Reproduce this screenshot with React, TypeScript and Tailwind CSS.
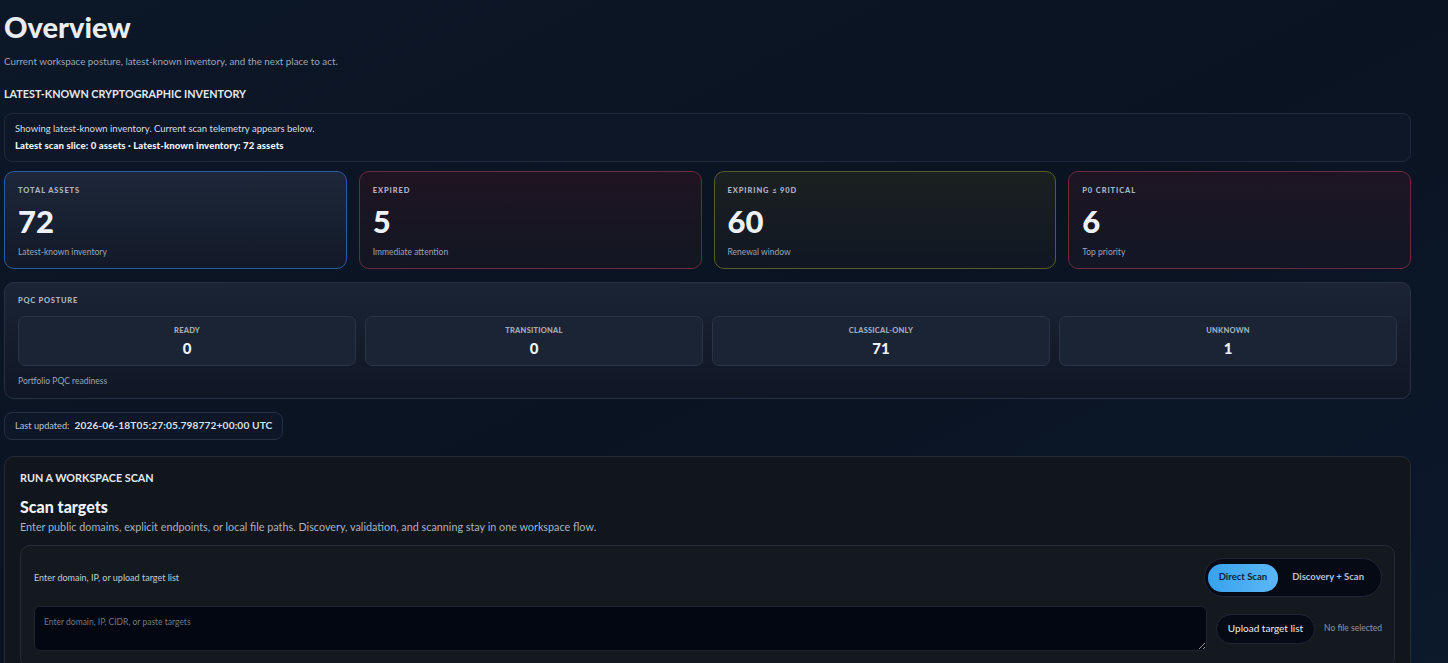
const stats = [
  {
    label: "TOTAL ASSETS",
    value: "72",
    note: "Latest-known inventory",
    tone: "border-[#2b5aa6] bg-gradient-to-b from-[#1e2739] to-[#121a29]",
  },
  {
    label: "EXPIRED",
    value: "5",
    note: "Immediate attention",
    tone: "border-[#6e2a38] bg-gradient-to-b from-[#1f1422] to-[#121623]",
  },
  {
    label: "EXPIRING ≤ 90D",
    value: "60",
    note: "Renewal window",
    tone: "border-[#5c5a26] bg-gradient-to-b from-[#1b2020] to-[#111723]",
  },
  {
    label: "P0 CRITICAL",
    value: "6",
    note: "Top priority",
    tone: "border-[#6e2a38] bg-gradient-to-b from-[#1e1524] to-[#121625]",
  },
];

const posture = [
  { label: "READY", value: "0" },
  { label: "TRANSITIONAL", value: "0" },
  { label: "CLASSICAL-ONLY", value: "71" },
  { label: "UNKNOWN", value: "1" },
];

export default function App() {
  return (
    <div className="min-h-screen bg-gradient-to-br from-[#0c1727] via-[#0a1322] to-[#0c1a2c] font-['Lato',sans-serif] text-[#e6ebf2]">
      <main className="w-[1411px] pl-1 pt-[10px] pb-10">
        <h1 className="text-[29px] font-black leading-[34px] text-[#e8edf4]">Overview</h1>
        <p className="mt-[10px] text-[9.8px] leading-[14px] text-[#9aa6b6]">
          Current workspace posture, latest-known inventory, and the next place to act.
        </p>
        <h2 className="mt-[19px] text-[10.8px] font-bold leading-[14px] text-[#e2e8f0]">
          LATEST-KNOWN CRYPTOGRAPHIC INVENTORY
        </h2>

        <div className="mt-[12px] flex h-[49px] flex-col justify-center gap-[5px] rounded-[8px] border border-[#1e2a3b] bg-[#0d1727] px-[10px]">
          <p className="text-[9.5px] leading-[12px] text-[#d5dce6]">
            Showing latest-known inventory. Current scan telemetry appears below.
          </p>
          <p className="text-[9.6px] font-black leading-[12px] tracking-[0.01em] text-[#eef2f7]">
            Latest scan slice: 0 assets · Latest-known inventory: 72 assets
          </p>
        </div>

        <div className="mt-[9px] grid grid-cols-4 gap-[12px]">
          {stats.map((s) => (
            <div key={s.label} className={`h-[98px] rounded-[10px] border px-[13px] pt-[14px] ${s.tone}`}>
              <div className="text-[7.5px] font-black leading-[10px] tracking-[0.12em] text-[#aab4c3]">{s.label}</div>
              <div className="mt-[9px] text-[31px] font-black leading-[32px] text-[#eef2f8]">{s.value}</div>
              <div className="mt-[9px] text-[8.5px] leading-[12px] text-[#9aa5b5]">{s.note}</div>
            </div>
          ))}
        </div>

        <div className="mt-[13px] h-[117px] rounded-[10px] border border-[#263143] bg-gradient-to-b from-[#1b2435] to-[#0f1625] px-[13px] pt-[13px]">
          <div className="text-[7.5px] font-black leading-[10px] tracking-[0.1em] text-[#aab4c3]">PQC POSTURE</div>
          <div className="mt-[10px] grid grid-cols-4 gap-[9px]">
            {posture.map((p) => (
              <div
                key={p.label}
                className="flex h-[50px] flex-col items-center justify-center gap-[4px] rounded-[7px] border border-[#2a3446] bg-[#1b2434]"
              >
                <div className="text-[7.5px] font-black leading-[10px] tracking-[0.03em] text-[#a3adbb]">{p.label}</div>
                <div className="text-[15px] font-black leading-[16px] text-[#eef2f8]">{p.value}</div>
              </div>
            ))}
          </div>
          <div className="mt-[9px] text-[8.5px] leading-[12px] text-[#9aa5b5]">Portfolio PQC readiness</div>
        </div>

        <div className="mt-[13px] inline-flex h-[28px] items-center gap-[5px] rounded-[8px] border border-[#243044] bg-[#0d1727] px-[10px]">
          <span className="text-[9.2px] text-[#b9c2ce]">Last updated:</span>
          <span className="text-[10.2px] font-bold tracking-[0.01em] text-[#d9e0ea]">2026-06-18T05:27:05.798772+00:00 UTC</span>
        </div>

        <section className="mt-[16px] rounded-[10px] border border-[#262c36] bg-[#11151c] px-[15px] pt-[14px] pb-4">
          <div className="text-[10.8px] font-bold leading-[14px] text-[#e2e8f0]">RUN A WORKSPACE SCAN</div>
          <h3 className="mt-[13px] text-[16px] font-black leading-[18px] text-[#eef2f8]">Scan targets</h3>
          <p className="mt-[4px] text-[10.8px] leading-[14px] text-[#a8b2c0]">
            Enter public domains, explicit endpoints, or local file paths. Discovery, validation, and scanning stay in one workspace flow.
          </p>
          <div className="mt-[11px] rounded-[10px] border border-[#252c37] bg-[#141920] pl-[13px] pr-[12px] pt-[12px] pb-4">
            <div className="flex items-center justify-between">
              <span className="text-[9px] text-[#c2cad5]">Enter domain, IP, or upload target list</span>
              <div className="flex h-[39px] items-center rounded-full border border-[#1f2736] bg-[#060a14] p-[3px]">
                <button className="h-[28px] rounded-full bg-gradient-to-r from-[#38a2ee] to-[#5ab7f5] px-[11px] text-[9.5px] font-bold text-[#0b2440]">
                  Direct Scan
                </button>
                <button className="h-[28px] px-[14px] text-[9.5px] font-bold text-[#b8c1cd]">Discovery + Scan</button>
              </div>
            </div>
            <div className="mt-[9px] flex items-center gap-[9px]">
              <textarea
                placeholder="Enter domain, IP, CIDR, or paste targets"
                className="h-[45px] flex-1 rounded-[6px] border border-[#1e2430] bg-[#030711] px-[9px] py-[9px] text-[8.5px] text-[#c8d0da] outline-none placeholder:text-[#6f7987]"
              />
              <button className="h-[30px] rounded-full border border-[#1f2736] bg-[#060a14] px-[11px] text-[10px] text-[#e8edf3]">
                Upload target list
              </button>
              <span className="text-[8.5px] text-[#8d97a5]">No file selected</span>
            </div>
          </div>
        </section>
      </main>
    </div>
  );
}
